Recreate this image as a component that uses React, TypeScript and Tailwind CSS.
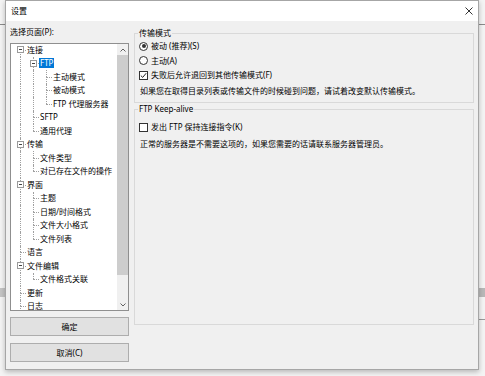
import React from "react";

type Row = {
  label: string;
  level: number;
  anc: boolean[];
  box?: boolean;
  last?: boolean;
  first?: boolean;
  selected?: boolean;
};

const rows: Row[] = [
  { label: "连接", level: 0, anc: [], box: true, first: true },
  { label: "FTP", level: 1, anc: [true], box: true, selected: true },
  { label: "主动模式", level: 2, anc: [true, true] },
  { label: "被动模式", level: 2, anc: [true, true] },
  { label: "FTP 代理服务器", level: 2, anc: [true, true], last: true },
  { label: "SFTP", level: 1, anc: [true] },
  { label: "通用代理", level: 1, anc: [true], last: true },
  { label: "传输", level: 0, anc: [], box: true },
  { label: "文件类型", level: 1, anc: [true] },
  { label: "对已存在文件的操作", level: 1, anc: [true], last: true },
  { label: "界面", level: 0, anc: [], box: true },
  { label: "主题", level: 1, anc: [true] },
  { label: "日期/时间格式", level: 1, anc: [true] },
  { label: "文件大小格式", level: 1, anc: [true] },
  { label: "文件列表", level: 1, anc: [true], last: true },
  { label: "语言", level: 0, anc: [] },
  { label: "文件编辑", level: 0, anc: [], box: true },
  { label: "文件格式关联", level: 1, anc: [true], last: true },
  { label: "更新", level: 0, anc: [] },
  { label: "日志", level: 0, anc: [] },
];

function AncCell({ v }: { v: boolean }) {
  return (
    <div className="relative w-[13px] h-full shrink-0">
      {v && (
        <div className="absolute left-[6px] top-0 bottom-0 border-l border-dotted border-[#a0a0a0]" />
      )}
    </div>
  );
}

function ConnCell({ first, last, box }: { first?: boolean; last?: boolean; box?: boolean }) {
  return (
    <div className="relative w-[13px] h-full shrink-0">
      {!first && (
        <div className="absolute left-[6px] top-0 h-1/2 border-l border-dotted border-[#a0a0a0]" />
      )}
      {!last && (
        <div className="absolute left-[6px] top-1/2 bottom-0 border-l border-dotted border-[#a0a0a0]" />
      )}
      <div className="absolute left-[6px] right-[1px] top-1/2 border-t border-dotted border-[#a0a0a0]" />
      {box && (
        <div className="absolute left-[3px] top-[3px] w-[7px] h-[7px] border border-[#9a9a9a] bg-white flex items-center justify-center">
          <div className="w-[3px] h-px bg-[#444]" />
        </div>
      )}
    </div>
  );
}

function Radio({ checked }: { checked?: boolean }) {
  return (
    <div className="w-[9px] h-[9px] rounded-full border border-[#333] bg-white flex items-center justify-center shrink-0">
      {checked && <div className="w-[4px] h-[4px] rounded-full bg-[#333]" />}
    </div>
  );
}

function Check({ checked }: { checked?: boolean }) {
  return (
    <div className="w-[9px] h-[9px] border border-[#333] bg-white flex items-center justify-center shrink-0">
      {checked && (
        <svg width="7" height="7" viewBox="0 0 7 7">
          <path d="M0.8 3.6 L2.7 5.4 L6.2 1.2" fill="none" stroke="#222" strokeWidth="1" />
        </svg>
      )}
    </div>
  );
}

export default function App() {
  return (
    <div className="relative w-[485px] h-[376px] bg-[#f4f4f4] overflow-hidden font-['Noto_Sans','Noto_Sans_CJK_SC',sans-serif] text-[8px] text-black">
      {/* desktop behind the dialog */}
      <div className="absolute left-0 top-[24px] w-full h-px bg-[#8a8a8a]" />
      <div className="absolute left-0 top-[288px] w-[8px] h-[9px] bg-[#c4c4c4]" />
      <div className="absolute right-0 top-[288px] w-[10px] h-[9px] bg-[#b8b8b8]" />
      <div className="absolute right-0 top-[319px] w-[10px] h-px bg-[#9a9a9a]" />

      <div className="relative z-10 ml-[5px] w-[474px] h-[370px] border border-[#a6a6a6] bg-[#f0f0f0] shadow-[0_2px_5px_rgba(0,0,0,0.25)] flex flex-col">
        {/* title bar */}
        <div className="h-[20px] bg-white flex items-center justify-between">
          <span className="pl-[5px] leading-[12px]">设置</span>
          <svg width="8" height="8" viewBox="0 0 8 8" className="mr-[5px]">
            <path d="M0.5 0.5 L7.5 7.5 M7.5 0.5 L0.5 7.5" stroke="#333" strokeWidth="1" />
          </svg>
        </div>

        {/* body */}
        <div className="flex-1 flex pl-[4px] pr-[4px]">
          {/* left column */}
          <div className="w-[119px] pt-[5px] flex flex-col">
            <div className="h-[12px] leading-[12px]">选择页面(P):</div>
            <div className="mt-[5px] h-[268px] border border-[#8f8f8f] bg-white flex overflow-hidden">
              <div className="flex-1 overflow-hidden pl-[3px]">
                <div className="mt-[-1px]">
                  {rows.map((r, i) => (
                    <div key={i} className="h-[13.5px] flex items-stretch">
                      {r.anc.map((v, j) => (
                        <AncCell key={j} v={v} />
                      ))}
                      <ConnCell first={r.first} last={r.last} box={r.box} />
                      <div className="flex items-center whitespace-nowrap">
                        {r.selected ? (
                          <span className="ml-[-1px] px-[1px] bg-[#0078d7] text-white leading-[10px]">
                            {r.label}
                          </span>
                        ) : (
                          <span className="leading-[12px]">{r.label}</span>
                        )}
                      </div>
                    </div>
                  ))}
                </div>
              </div>
              {/* scrollbar */}
              <div className="w-[11px] bg-[#f0f0f0] flex flex-col shrink-0">
                <div className="h-[11px] flex items-center justify-center">
                  <svg width="6" height="4" viewBox="0 0 6 4">
                    <path d="M0.5 3.5 L3 1 L5.5 3.5" fill="none" stroke="#606060" strokeWidth="1" />
                  </svg>
                </div>
                <div className="flex-1">
                  <div className="h-[220px] bg-[#cdcdcd]" />
                </div>
                <div className="h-[11px] flex items-center justify-center">
                  <svg width="6" height="4" viewBox="0 0 6 4">
                    <path d="M0.5 0.5 L3 3 L5.5 0.5" fill="none" stroke="#606060" strokeWidth="1" />
                  </svg>
                </div>
              </div>
            </div>
            <button className="mt-[6px] h-[19px] border border-[#adadad] bg-[#e1e1e1] flex items-center justify-center leading-[12px]">
              确定
            </button>
            <button className="mt-[7px] h-[19px] border border-[#adadad] bg-[#e1e1e1] flex items-center justify-center leading-[12px]">
              取消(C)
            </button>
          </div>

          {/* right column */}
          <div className="ml-[5px] w-[340px] pt-[6px] flex flex-col">
            <fieldset className="border border-[#d9d9d9] px-[4px] pb-[3px]">
              <legend className="ml-[-1px] px-[1px] leading-[12px]">传输模式</legend>
              <div className="h-[14px] flex items-center gap-[3px]">
                <Radio checked />
                <span className="leading-[12px]">被动 (推荐)(S)</span>
              </div>
              <div className="h-[15px] flex items-center gap-[3px]">
                <Radio />
                <span className="leading-[12px]">主动(A)</span>
              </div>
              <div className="h-[14px] flex items-center gap-[3px]">
                <Check checked />
                <span className="leading-[12px]">失败后允许退回到其他传输模式(F)</span>
              </div>
              <div className="h-[17px] flex items-center pl-[1px] whitespace-nowrap">
                如果您在取得目录列表或传输文件的时候碰到问题，请试着改变默认传输模式。
              </div>
            </fieldset>
            <fieldset className="h-[222px] border border-[#d9d9d9] px-[4px]">
              <legend className="ml-[-1px] px-[1px] leading-[12px]">FTP Keep-alive</legend>
              <div className="mt-[4px] h-[16px] flex items-center gap-[3px]">
                <Check />
                <span className="leading-[12px]">发出 FTP 保持连接指令(K)</span>
              </div>
              <div className="h-[18px] flex items-center pl-[1px] whitespace-nowrap">
                正常的服务器是不需要这项的，如果您需要的话请联系服务器管理员。
              </div>
            </fieldset>
          </div>
        </div>
      </div>
    </div>
  );
}
